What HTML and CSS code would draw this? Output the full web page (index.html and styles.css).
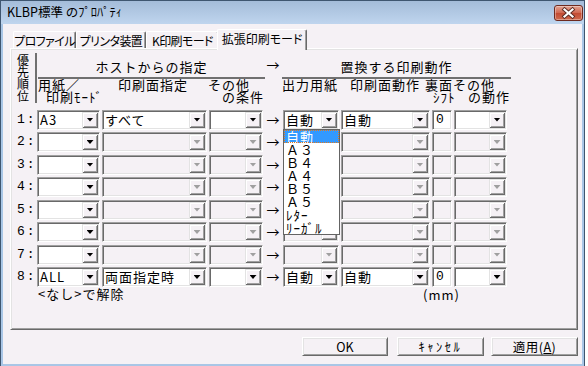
FILE: index.html
```html
<!DOCTYPE html>
<html lang="ja">
<head>
<meta charset="utf-8">
<link rel="stylesheet" href="styles.css">
</head>
<body>
<div class="window">
  <div class="titlebar">
    <span class="title">KLBP標準 のﾌﾟﾛﾊﾟﾃｨ</span>
    <div class="close">
      <svg width="27" height="14" viewBox="0 0 27 14">
        <path d="M9.5 3.5 L17.5 10.5 M17.5 3.5 L9.5 10.5" stroke="#5a2a22" stroke-width="4" stroke-linecap="square"/>
        <path d="M9.5 3.5 L17.5 10.5 M17.5 3.5 L9.5 10.5" stroke="#ffffff" stroke-width="2.2" stroke-linecap="square"/>
      </svg>
    </div>
  </div>
  <div class="client">
    <div class="tabs">
      <div class="tab t1">プロファイル</div>
      <div class="tab t2">プリンタ装置</div>
      <div class="tab t3">K印刷モード</div>
      <div class="tab active">拡張印刷モード</div>
    </div>
    <div class="panel">
      <div class="grid">
        <div class="prio">優<br>先<br>順<br>位</div>
        <div class="hgroup host">ホストからの指定</div>
        <div class="harrow">→</div>
        <div class="hgroup repl">置換する印刷動作</div>

        <div class="sub s1"><span>用紙／</span><span class="in8">印刷ﾓｰﾄﾞ</span></div>
        <div class="sub s2"><span>印刷面指定</span></div>
        <div class="sub s3"><span>その他</span><span class="in14">の条件</span></div>
        <div class="sub s5"><span>出力用紙</span></div>
        <div class="sub s6"><span>印刷面動作</span></div>
        <div class="sub s7"><span>裏面その他</span><span class="in8"><span class="shift">ｼﾌﾄ</span><span class="dosa">の動作</span></span></div>

        <!-- row 1 -->
        <div class="num">1:</div>
        <div class="cb"><span>A3</span><b></b></div>
        <div class="cb"><span>すべて</span><b></b></div>
        <div class="cb"><span></span><b></b></div>
        <div class="arr">→</div>
        <div class="cb"><span>自動</span><b></b></div>
        <div class="cb"><span>自動</span><b></b></div>
        <div class="tb">0</div>
        <div class="cb"><span></span><b></b></div>

        <!-- row 2 -->
        <div class="num">2:</div>
        <div class="cb"><span></span><b></b></div>
        <div class="cb dis"><span></span><b></b></div>
        <div class="cb dis"><span></span><b></b></div>
        <div class="arr">→</div>
        <div class="cb dis"><span></span><b></b></div>
        <div class="cb dis"><span></span><b></b></div>
        <div class="tb dis"></div>
        <div class="cb dis"><span></span><b></b></div>

        <!-- row 3 -->
        <div class="num">3:</div>
        <div class="cb"><span></span><b></b></div>
        <div class="cb dis"><span></span><b></b></div>
        <div class="cb dis"><span></span><b></b></div>
        <div class="arr">→</div>
        <div class="cb dis"><span></span><b></b></div>
        <div class="cb dis"><span></span><b></b></div>
        <div class="tb dis"></div>
        <div class="cb dis"><span></span><b></b></div>

        <!-- row 4 -->
        <div class="num">4:</div>
        <div class="cb"><span></span><b></b></div>
        <div class="cb dis"><span></span><b></b></div>
        <div class="cb dis"><span></span><b></b></div>
        <div class="arr">→</div>
        <div class="cb dis"><span></span><b></b></div>
        <div class="cb dis"><span></span><b></b></div>
        <div class="tb dis"></div>
        <div class="cb dis"><span></span><b></b></div>

        <!-- row 5 -->
        <div class="num">5:</div>
        <div class="cb"><span></span><b></b></div>
        <div class="cb dis"><span></span><b></b></div>
        <div class="cb dis"><span></span><b></b></div>
        <div class="arr">→</div>
        <div class="cb dis"><span></span><b></b></div>
        <div class="cb dis"><span></span><b></b></div>
        <div class="tb dis"></div>
        <div class="cb dis"><span></span><b></b></div>

        <!-- row 6 -->
        <div class="num">6:</div>
        <div class="cb"><span></span><b></b></div>
        <div class="cb dis"><span></span><b></b></div>
        <div class="cb dis"><span></span><b></b></div>
        <div class="arr">→</div>
        <div class="cb dis"><span></span><b></b></div>
        <div class="cb dis"><span></span><b></b></div>
        <div class="tb dis"></div>
        <div class="cb dis"><span></span><b></b></div>

        <!-- row 7 -->
        <div class="num">7:</div>
        <div class="cb"><span></span><b></b></div>
        <div class="cb dis"><span></span><b></b></div>
        <div class="cb dis"><span></span><b></b></div>
        <div class="arr">→</div>
        <div class="cb dis"><span></span><b></b></div>
        <div class="cb dis"><span></span><b></b></div>
        <div class="tb dis"></div>
        <div class="cb dis"><span></span><b></b></div>

        <!-- row 8 -->
        <div class="num">8:</div>
        <div class="cb"><span>ALL</span><b></b></div>
        <div class="cb"><span>両面指定時</span><b></b></div>
        <div class="cb"><span></span><b></b></div>
        <div class="arr">→</div>
        <div class="cb"><span>自動</span><b></b></div>
        <div class="cb"><span>自動</span><b></b></div>
        <div class="tb">0</div>
        <div class="cb"><span></span><b></b></div>

        <div class="note">&lt;なし&gt;で解除</div>
        <div class="mm"><span>(mm)</span></div>

        <ul class="droplist">
          <li class="sel">自動</li>
          <li>Ａ３</li>
          <li>Ｂ４</li>
          <li>Ａ４</li>
          <li>Ｂ５</li>
          <li>Ａ５</li>
          <li>ﾚﾀｰ</li>
          <li>ﾘｰｶﾞﾙ</li>
        </ul>
      </div>
    </div>
    <div class="buttons">
      <div class="btn ok">OK</div>
      <div class="btn cancel">ｷｬﾝｾﾙ</div>
      <div class="btn apply">適用(<u>A</u>)</div>
    </div>
  </div>
</div>
</body>
</html>
```

FILE: styles.css
```css
* { box-sizing: border-box; }

body {
  margin: 0;
  background: #ffffff;
  font-family: "Noto Sans CJK JP", "Noto Sans", sans-serif;
  font-size: 13px;
  color: #000;
}

.window {
  width: 585px;
  height: 366px;
  border: 1px solid #3f5670;
  border-bottom: none;
  background: #a9c6e6;
  display: flex;
  flex-direction: column;
}

.titlebar {
  height: 23px;
  flex: none;
  background: linear-gradient(#a4bcd9, #bfd5ee);
  display: flex;
  align-items: center;
  justify-content: space-between;
  padding: 0 1px 1px 6px;
}

.title {
  font-size: 12.5px;
  line-height: 14px;
  color: #000;
}

.close {
  width: 29px;
  height: 16px;
  border: 1px solid #6e2a1f;
  border-radius: 3px;
  background: linear-gradient(#e3a493, #d0664f 50%, #c24a32 51%, #cf6a4e);
  box-shadow: inset 0 0 0 1px rgba(255,255,255,0.35);
  display: flex;
  align-items: center;
  justify-content: center;
  margin-top: 1px;
}

.close svg { display: block; }

.client {
  flex: 1;
  margin: 0 2px 2px;
  background: #f5f1f5;
  padding: 5px 4px 0 7px;
}

/* tabs */
.tabs {
  display: flex;
  align-items: flex-end;
  height: 19px;
  padding-left: 3px;
  position: relative;
  z-index: 2;
  font-size: 12px;
  font-feature-settings: "palt";
  letter-spacing: -0.6px;
}

.tab {
  height: 17px;
  line-height: 16px;
  text-align: center;
  border-top: 1px solid #ffffff;
  border-left: 1px solid #ffffff;
  border-right: 1px solid #696969;
  box-shadow: inset -1px 0 #a0a0a0;
  border-radius: 2px 2px 0 0;
  padding-top: 1px;
  white-space: nowrap;
}

.t1 { width: 63px; }
.t2 { width: 70px; }
.t3 { width: 73px; }

.tab.active {
  width: 90px;
  height: 21px;
  margin: 0 -2px -2px -2px;
  background: #f5f1f5;
  padding-top: 0;
  line-height: 17px;
  position: relative;
  letter-spacing: 0;
}

/* panel */
.panel {
  width: 568px;
  height: 282px;
  border: 1px solid;
  border-color: #ffffff #696969 #696969 #ffffff;
  box-shadow: inset 1px 1px #e3e3e3, inset -1px -1px #a0a0a0;
  padding: 4px 0 0 1px;
}

.grid {
  position: relative;
  display: grid;
  grid-template-columns: 23px 63px 105px 54px 16px 56px 89px 20px 53px;
  grid-template-rows: 26px 30.5px repeat(7, 22.5px) 20px 14px;
  column-gap: 2px;
  letter-spacing: 1px;
}

.prio {
  grid-column: 1;
  grid-row: 1 / span 2;
  height: 50px;
  margin-right: -2px;
  border-right: 2px solid #707070;
  padding: 1px 0 0 5px;
  font-size: 12px;
  line-height: 12px;
}

.hgroup {
  grid-row: 1;
  height: 26px;
  padding-top: 7px;
  line-height: 14px;
  text-align: center;
  border-bottom: 2px solid #707070;
  white-space: nowrap;
}

.host { grid-column: 2 / 5; margin: 0 -2px 0 1px; }
.repl { grid-column: 6 / 10; margin: 0 -4px 0 -1px; }

.harrow {
  grid-column: 5;
  grid-row: 1;
  padding-top: 5px;
  line-height: 14px;
  text-align: center;
  letter-spacing: 0;
}

.sub {
  grid-row: 2;
  display: flex;
  flex-direction: column;
  line-height: 11.5px;
  white-space: nowrap;
}

.s1 { grid-column: 2; padding-left: 1px; }
.s2 { grid-column: 3; padding-left: 16px; }
.s3 { grid-column: 4; padding-left: 0; margin-left: -1px; }
.s5 { grid-column: 6; margin-left: -1px; }
.s6 { grid-column: 7; padding-left: 9px; }
.s7 { grid-column: 8 / 10; margin-left: -7px; }

.in8 { padding-left: 8px; }
.in14 { padding-left: 14px; }
.shift { display: inline-block; width: 35px; }

.num {
  grid-column: 1;
  font-family: "Liberation Mono", monospace;
  font-size: 13px;
  letter-spacing: 2px;
  padding-left: 5px;
  line-height: 20px;
  height: 20px;
}

.arr {
  text-align: center;
  line-height: 20px;
  height: 20px;
  letter-spacing: 0;
}

/* combo box */
.cb {
  height: 20px;
  background: #ffffff;
  border: 1px solid;
  border-color: #a0a0a0 #ffffff #ffffff #a0a0a0;
  box-shadow: inset 1px 1px #696969, inset -1px -1px #e3e3e3;
  padding: 1px;
  display: flex;
  align-items: stretch;
}

.cb span {
  flex: 1;
  min-width: 0;
  padding-left: 1px;
  line-height: 16px;
  white-space: nowrap;
}

.cb b {
  flex: none;
  width: 16px;
  background: #f5f1f5;
  box-shadow: inset 1px 1px #e3e3e3, inset -1px -1px #696969, inset 2px 2px #ffffff, inset -2px -2px #a0a0a0;
  display: flex;
  align-items: center;
  justify-content: center;
}

.cb b::after {
  content: "";
  width: 7px;
  height: 4px;
  background: #000;
  clip-path: polygon(0 0, 100% 0, 50% 100%);
}

.cb.dis { background: #f5f1f5; }
.cb.dis b::after { background: #a0a0a0; }

/* text box */
.tb {
  height: 20px;
  background: #ffffff;
  border: 1px solid;
  border-color: #a0a0a0 #ffffff #ffffff #a0a0a0;
  box-shadow: inset 1px 1px #696969, inset -1px -1px #e3e3e3;
  padding: 1px 0 0 3px;
  line-height: 16px;
  font-family: "Liberation Mono", monospace;
}

.tb.dis { background: #f5f1f5; }

.note {
  grid-column: 2 / 5;
  padding-left: 1px;
  line-height: 13px;
  white-space: nowrap;
}

.mm {
  grid-column: 8;
  display: flex;
  justify-content: center;
  line-height: 15px;
  letter-spacing: 1px;
  white-space: nowrap;
  margin-left: -1px;
}

/* dropdown list */
.droplist {
  position: absolute;
  left: 271px;
  top: 76px;
  width: 57px;
  margin: 0;
  padding: 0;
  list-style: none;
  background: #ffffff;
  border: 1px solid #646464;
  z-index: 5;
}

.droplist li {
  height: 13px;
  line-height: 13px;
  padding-left: 2px;
  white-space: nowrap;
}

.droplist li.sel {
  background: #3399ff;
  color: #ffffff;
  outline: 1px dotted #e07a20;
  outline-offset: -1px;
}

/* buttons */
.buttons {
  display: flex;
  justify-content: flex-end;
  margin-top: 7px;
  font-size: 12.5px;
}

.btn {
  height: 19px;
  line-height: 17px;
  text-align: center;
  background: #f5f1f5;
  border: 1px solid;
  border-color: #ffffff #696969 #696969 #ffffff;
  box-shadow: inset 1px 1px #e3e3e3, inset -1px -1px #a0a0a0;
}

.ok { width: 86px; margin-right: 9px; }
.cancel { width: 87px; margin-right: 7px; letter-spacing: 2.5px; }
.apply { width: 87px; letter-spacing: 0.5px; }
```
